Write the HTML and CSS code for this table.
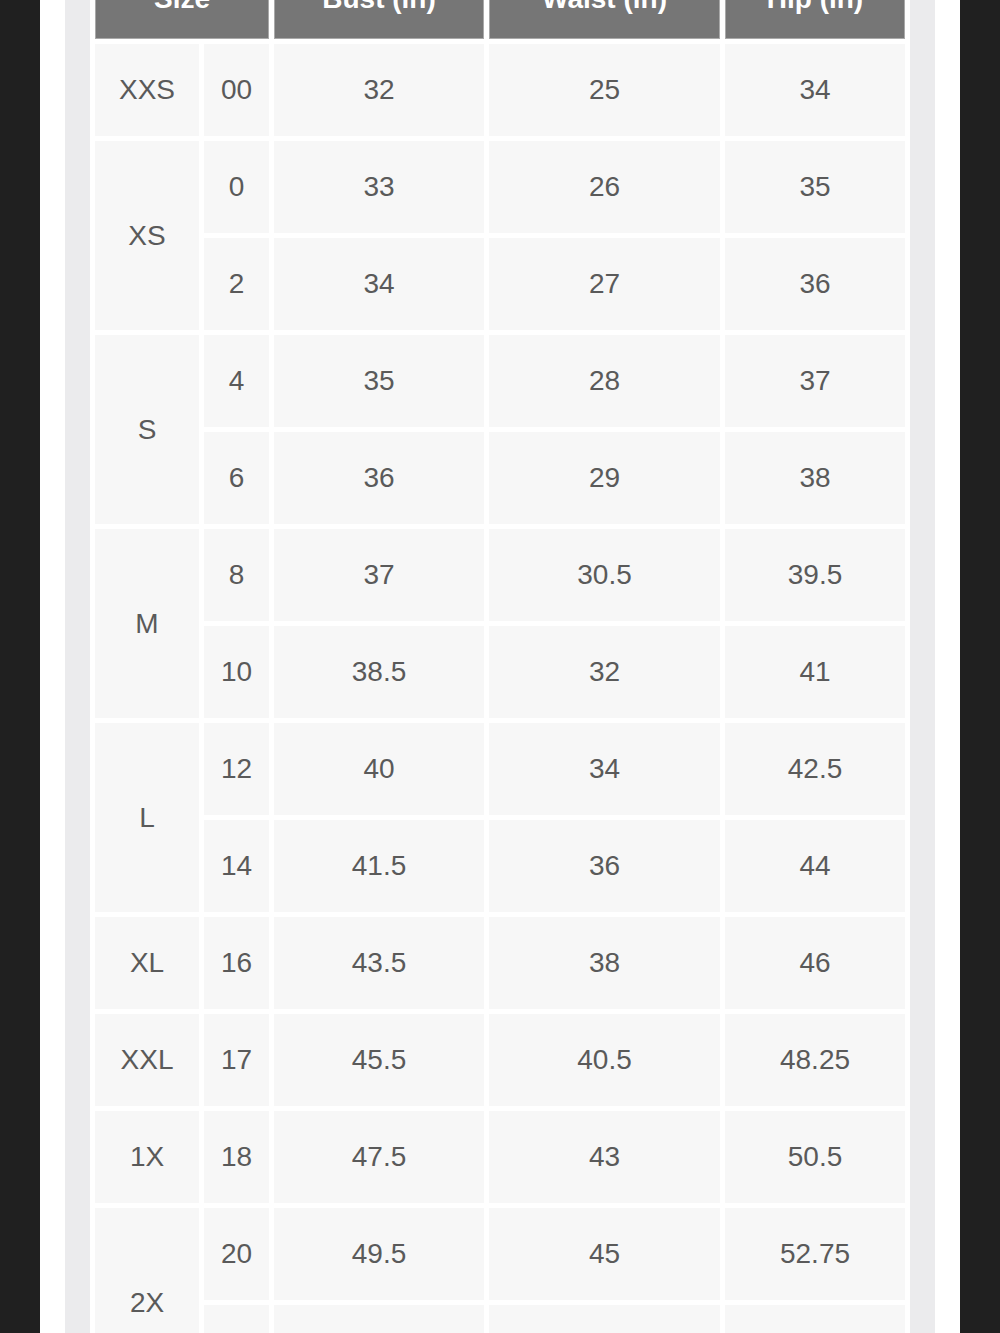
FILE: index.html
```html
<!DOCTYPE html>
<html>
<head>
<meta charset="utf-8">
<link rel="stylesheet" href="styles.css">
</head>
<body>
<div class="frame">
  <div class="gutter">
    <div class="sheet">
      <table class="chart">
        <colgroup>
          <col class="c-size"><col class="c-num"><col class="c-bust"><col class="c-waist"><col class="c-hip">
        </colgroup>
        <thead>
          <tr><th colspan="2">Size</th><th>Bust (in)</th><th>Waist (in)</th><th>Hip (in)</th></tr>
        </thead>
        <tbody>
          <tr><td>XXS</td><td>00</td><td>32</td><td>25</td><td>34</td></tr>
          <tr><td rowspan="2">XS</td><td>0</td><td>33</td><td>26</td><td>35</td></tr>
          <tr><td>2</td><td>34</td><td>27</td><td>36</td></tr>
          <tr><td rowspan="2">S</td><td>4</td><td>35</td><td>28</td><td>37</td></tr>
          <tr><td>6</td><td>36</td><td>29</td><td>38</td></tr>
          <tr><td rowspan="2">M</td><td>8</td><td>37</td><td>30.5</td><td>39.5</td></tr>
          <tr><td>10</td><td>38.5</td><td>32</td><td>41</td></tr>
          <tr><td rowspan="2">L</td><td>12</td><td>40</td><td>34</td><td>42.5</td></tr>
          <tr><td>14</td><td>41.5</td><td>36</td><td>44</td></tr>
          <tr><td>XL</td><td>16</td><td>43.5</td><td>38</td><td>46</td></tr>
          <tr><td>XXL</td><td>17</td><td>45.5</td><td>40.5</td><td>48.25</td></tr>
          <tr><td>1X</td><td>18</td><td>47.5</td><td>43</td><td>50.5</td></tr>
          <tr><td rowspan="2">2X</td><td>20</td><td>49.5</td><td>45</td><td>52.75</td></tr>
          <tr><td>22</td><td>51.5</td><td>47</td><td>55</td></tr>
        </tbody>
      </table>
    </div>
  </div>
</div>
</body>
</html>
```

FILE: styles.css
```css
html, body {
  margin: 0;
  padding: 0;
  background: #202020;
  height: 1333px;
  overflow: hidden;
}
.frame {
  width: 870px;
  margin-left: 40px;
  padding: 0 25px;
  background: #ffffff;
  height: 1333px;
}
.gutter {
  width: 820px;
  padding: 0 25px;
  background: #ebebed;
  height: 1333px;
}
.sheet {
  width: 820px;
  background: #ffffff;
  height: 1333px;
  overflow: hidden;
}
.chart {
  width: 820px;
  table-layout: fixed;
  border-collapse: separate;
  border-spacing: 5px;
  margin-top: -47px;
  font-family: "Liberation Sans", Arial, sans-serif;
}
.c-size { width: 104px; }
.c-num { width: 65px; }
.c-bust { width: 210px; }
.c-waist { width: 231px; }
.c-hip { width: 180px; }
.chart th {
  height: 79px;
  padding: 0;
  background: #767676;
  border: 1px solid #a9a9a9;
  color: #ffffff;
  font-size: 28px;
  font-weight: bold;
  text-align: center;
  vertical-align: middle;
}
.chart td {
  height: 92px;
  padding: 0;
  background: #f7f7f7;
  color: #5a5a5a;
  font-size: 28px;
  text-align: center;
  vertical-align: middle;
}
```
